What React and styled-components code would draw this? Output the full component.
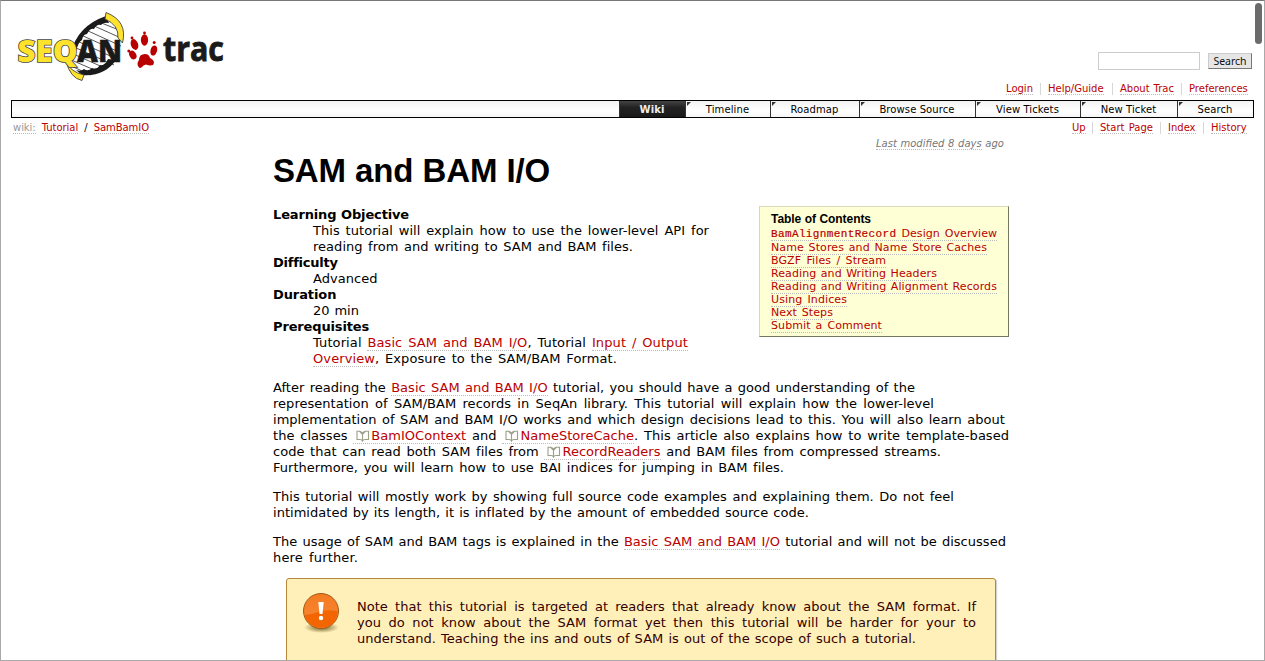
import React from 'react';
import styled, { createGlobalStyle, css } from 'styled-components';

const Global = createGlobalStyle`
  * { box-sizing: border-box; }
  html, body { margin: 0; overflow: hidden; }
  body { background: #fff; color: #000; font: 13px/16px "DejaVu Sans", Verdana, sans-serif; }
`;

const Page = styled.div`
  position: relative;
  height: 661px;
  overflow: hidden;
  padding: 0 10px;
  border: 1px solid #a9a9a9;
  border-top-color: #777;
`;

const ScrollThumb = styled.div`
  position: absolute;
  top: 2px;
  right: 2px;
  width: 7px;
  height: 41px;
  border-radius: 4px;
  background: #6b6b6b;
`;

const Header = styled.header`
  display: flex;
  justify-content: space-between;
  height: 99px;
`;

const LogoSvg = styled.svg`
  display: block;
  margin: 9px 0 0 5px;
`;

const HeaderTools = styled.div`
  display: flex;
  flex-direction: column;
  align-items: flex-end;
  padding: 51px 1px 0 0;
`;

const SearchForm = styled.div`
  display: flex;
  align-items: center;
  gap: 8px;
  margin-right: 1px;
`;

const SearchInput = styled.input`
  width: 102px;
  height: 18px;
  border: 1px solid #ccc;
  background: #fff;
  padding: 0;
`;

const SearchButton = styled.button`
  width: 44px;
  height: 16px;
  padding: 0;
  border: 1px solid #ccc;
  border-right-color: #777;
  border-bottom-color: #777;
  background: #e6e6e6;
  color: #111;
  font: 10.5px/13px "Noto Sans", sans-serif;
`;

const Link = styled.a`
  color: #b00;
  border-bottom: 1px dotted #bbb;
  ${(p) => p.$muted && css`color: #999;`}
`;

const Fit = styled.span`
  display: block;
  width: ${(p) => p.$w}px;
  letter-spacing: ${(p) => p.$ls ?? 0.03}px;
  text-align: justify;
  text-align-last: justify;
  white-space: nowrap;
`;

const Menu = styled.ul`
  display: flex;
  justify-content: flex-end;
  list-style: none;
  margin: ${(p) => p.$top}px ${(p) => p.$right}px 0 0;
  padding: 0;
  font-size: 10px;
  line-height: 12px;
`;

const MenuItem = styled.li`
  height: 12px;
  padding: 0 7px;
  & + & { border-left: 1px solid #d7d7d7; }
  &:last-child { padding-right: 1px; }
`;

const Nav = styled.nav`
  display: flex;
  justify-content: flex-end;
  width: 1243px;
  height: 18px;
  border: 1px solid #000;
  background: linear-gradient(#f2f2f2, #fff 60%, #f6f6f6);
  font-size: 10px;
  line-height: 17px;
`;

const Tab = styled.div`
  position: relative;
  width: ${(p) => p.$w}px;
  border-left: 1px solid #333;
  text-align: center;
  letter-spacing: 0.1px;
  padding-right: 1px;
  &::before {
    content: "";
    position: absolute;
    left: 1px;
    top: 1px;
    border-top: 4px solid #333;
    border-right: 4px solid transparent;
  }
  ${(p) => p.$active && css`
    background: linear-gradient(#444, #222 40%, #181a18);
    color: #eee;
    font-weight: bold;
    &::before { display: none; }
  `}
`;

const SubBar = styled.div`
  display: flex;
  justify-content: space-between;
  padding-left: 2px;
  height: 19px;
`;

const Path = styled.div`
  margin-top: 4px;
  font-size: 10px;
  line-height: 12px;
`;

const Content = styled.main`
  width: 740px;
  margin: 0 0 0 262px;
`;

const Modified = styled.div`
  display: flex;
  justify-content: flex-end;
  padding-right: 9px;
  color: #777;
  font-size: 10px;
  line-height: 13px;
  font-style: italic;
  a { color: #777; }
`;

const Title = styled.h1`
  margin: 1px 0 15px;
  font: bold 33px/40px "Liberation Sans", Arial, sans-serif;
`;

const Intro = styled.div`
  display: flex;
  align-items: flex-start;
  justify-content: space-between;
  width: 736px;
`;

const Defs = styled.dl`
  margin: 1px 0 0;
  dt { font-weight: bold; }
  dd { margin: 0 0 0 40px; }
`;

const Toc = styled.aside`
  width: 250px;
  height: 131px;
  padding: 5px 0 0 11px;
  border: 1px solid #d7d7bb;
  border-right-color: #77775f;
  border-bottom-color: #77775f;
  background: #ffffd6;
  font-size: 11px;
  line-height: 13px;
  h4 { margin: 0; font: bold 12px/14px "Liberation Sans", Arial, sans-serif; }
  code { font: 11px/12px "Liberation Mono", monospace; letter-spacing: 0.37px; -webkit-text-stroke: 0.2px #b00; }
`;

const TocFirst = styled.div`
  height: 15px;
  line-height: 15px;
`;

const Para = styled.p`
  margin: 13px 0 0;
`;

const BookSvg = styled.svg`
  vertical-align: -2px;
  margin: 0 1px 0 2px;
`;

const Note = styled.section`
  display: flex;
  width: 710px;
  height: 110px;
  margin: 12px 0 0 13px;
  padding: 14px 0 0 16px;
  border: 1px solid #b8863b;
  border-radius: 3px;
  background: #fff0ba;
  box-shadow: 1px 1px 1px #ccc;
  color: #300;
`;

const NoteText = styled.div`
  margin: 6px 0 0 16px;
`;

const Logo = () => (
  <LogoSvg width="225" height="76" viewBox="16 10 225 76">
    <path d="M76 50Q82 29 106 19L119 32Q123 44 114 62Q105 74 83 72L68 62Z" fill="#fff" />
    <path d="M99 22L119 30M92 25L121 38M86 30L121 46M81 35L119 52M77 41L117 59M74 47L114 65M71 53L107 69M69 59L99 72M69 65L91 75" stroke="#444" strokeWidth=".9" />
    <path d="M71 53Q77 26 106 16L109 23Q103 22 101 25Q97 24 94 29Q90 28 87 34Q83 34 82 40Q78 42 76 52Z" fill="#1a1a1a" />
    <path d="M116 60Q104 77 82 75L76 70Q81 72 84 69Q88 72 92 68Q97 70 100 65Q105 66 108 59Z" fill="#1a1a1a" />
    <path d="M106 12.500Q128 21 122.500 43L118 38Q119 25 105 19Z" fill="#ffe22b" stroke="#444" strokeWidth=".9" />
    <path d="M66 61Q70 72 84 75L82 80.500Q70 78 66 61Z" fill="#ffe22b" stroke="#444" strokeWidth=".9" />
    <text x="17.500" y="61.500" textLength="60" lengthAdjust="spacingAndGlyphs" fontFamily="Open Sans" fontWeight="800" fontSize="30.500" fill="#ffe22b" stroke="#444" strokeWidth="1.600" paintOrder="stroke">SEQ</text>
    <text x="77" y="61.500" textLength="45" lengthAdjust="spacingAndGlyphs" fontFamily="Open Sans" fontWeight="800" fontSize="30.500" fill="#1a1a1a" stroke="#1a1a1a" strokeWidth=".5">AN</text>
    <g fill="#b80000">
      <ellipse cx="144.500" cy="40" rx="3.600" ry="5.800" />
      <ellipse cx="134.500" cy="44.500" rx="3.600" ry="5.600" transform="rotate(-20 134.500 44.500)" />
      <ellipse cx="153.800" cy="50.500" rx="3.300" ry="5.200" transform="rotate(15 153.800 50.500)" />
      <ellipse cx="132.800" cy="55" rx="3.300" ry="4.600" transform="rotate(-30 132.800 55)" />
      <path d="M139 67.500Q136 64 139 60Q139 54 145 54Q149 54 150 58Q156 61 153 65Q150 66 146 64.500Q143 65 142 67Q140 68.500 139 67.500Z" />
      <circle cx="144.500" cy="33" r="1.400" /><circle cx="132" cy="38" r="1.400" />
      <circle cx="154.200" cy="42.500" r="1.500" /><circle cx="128.800" cy="51" r="1.500" />
    </g>
    <text x="163" y="61" textLength="61" lengthAdjust="spacingAndGlyphs" fontFamily="Open Sans" fontWeight="700" fontSize="34.500" fill="#1a1a1a" stroke="#1a1a1a" strokeWidth=".9">trac</text>
  </LogoSvg>
);

const Book = () => (
  <BookSvg width="15" height="12" viewBox="0 0 15 12" fill="none" stroke="#9aa088" strokeWidth="1.100">
    <path d="M7.500 11V3.500Q6.500 1 4.500 1.200L7 4M7.500 3.500Q8.500 1 10.500 1.200L8 4M4.500 1.200H2V9.500H5Q7 9.500 7.500 11Q8 9.500 10 9.500H13.500V1.200H10.500" />
  </BookSvg>
);

const Warning = () => (
  <svg width="38" height="42" viewBox="0 0 38 42">
    <defs>
      <linearGradient id="orange" x2="0" y2="1">
        <stop stopColor="#f47a20" /><stop offset="1" stopColor="#f88a3a" />
      </linearGradient>
      <radialGradient id="shade"><stop stopColor="#6b5b20" /><stop offset="1" stopColor="#6b5b20" stopOpacity="0" /></radialGradient>
    </defs>
    <ellipse cx="18.500" cy="34.500" rx="17.500" ry="5.500" fill="url(#shade)" />
    <circle cx="18" cy="18" r="17.500" fill="url(#orange)" stroke="#a05a18" />
    <path d="M1.500 22Q8 22 15 19T34.500 18Q34 34 18 34.800Q5 34 1.500 22Z" fill="#f26500" />
    <path d="M15.300 9H20.700L19.500 21H16.500Z" fill="#fff" /><circle cx="18" cy="25" r="2.200" fill="#fff" />
  </svg>
);

const META = [['Login', 27], ['Help/Guide', 57], ['About Trac', 54], ['Preferences', 58]];
const CTX = [['Up', 13], ['Start Page', 53], ['Index', 28], ['History', 36]];
const TABS = [['Wiki', 66], ['Timeline', 85], ['Roadmap', 89], ['Browse Source', 116], ['View Tickets', 105], ['New Ticket', 97], ['Search', 76]];
const TOC = [['Name Stores and Name Store Caches', 216], ['BGZF Files / Stream', 115], ['Reading and Writing Headers', 166], ['Reading and Writing Alignment Records', 226], ['Using Indices', 76], ['Next Steps', 62], ['Submit a Comment', 111]];

const LinkMenu = ({ items, top, right }) => (
  <Menu $top={top} $right={right}>
    {items.map(([t, w]) => <MenuItem key={t}><Fit $w={w} $ls={0}><Link>{t}</Link></Fit></MenuItem>)}
  </Menu>
);

export default function App() {
  return (
    <Page>
      <Global />
      <ScrollThumb />
      <Header>
        <Logo />
        <HeaderTools>
          <SearchForm><SearchInput /><SearchButton>Search</SearchButton></SearchForm>
          <LinkMenu items={META} top={13} right={5} />
        </HeaderTools>
      </Header>
      <Nav>{TABS.map(([t, w], i) => <Tab key={t} $w={w} $active={i === 0}>{t}</Tab>)}</Nav>
      <SubBar>
        <Path><Fit $w={136} $ls={-0.05}><Link $muted>wiki:</Link> <Link>Tutorial</Link> / <Link>SamBamIO</Link></Fit></Path>
        <LinkMenu items={CTX} top={4} right={6} />
      </SubBar>
      <Content>
        <Modified><Fit $w={128} $ls={0}><Link>Last modified</Link> <Link>8 days</Link> ago</Fit></Modified>
        <Title><Fit $w={277} $ls={-0.15}>SAM and BAM I/O</Fit></Title>
        <Intro>
          <Defs>
            <dt><Fit $w={136} $ls={-0.15}>Learning Objective</Fit></dt>
            <dd><Fit $w={396}>This tutorial will explain how to use the lower-level API for</Fit><Fit $w={320}>reading from and writing to SAM and BAM files.</Fit></dd>
            <dt><Fit $w={64} $ls={-0.25}>Difficulty</Fit></dt>
            <dd><Fit $w={65}>Advanced</Fit></dd>
            <dt><Fit $w={63} $ls={-0.1}>Duration</Fit></dt>
            <dd><Fit $w={46}>20 min</Fit></dd>
            <dt><Fit $w={97} $ls={-0.15}>Prerequisites</Fit></dt>
            <dd>
              <Fit $w={375} $ls={0.1}>Tutorial <Link>Basic SAM and BAM I/O</Link>, Tutorial <Link>Input / Output</Link></Fit>
              <Fit $w={304} $ls={0.1}><Link>Overview</Link>, Exposure to the SAM/BAM Format.</Fit>
            </dd>
          </Defs>
          <Toc>
            <h4><Fit $w={100} $ls={-0.05}>Table of Contents</Fit></h4>
            <TocFirst><Fit $w={226} $ls={0.05}><Link><code>BamAlignmentRecord</code> Design Overview</Link></Fit></TocFirst>
            {TOC.map(([t, w]) => <Fit key={t} $w={w} $ls={0.1}><Link>{t}</Link></Fit>)}
          </Toc>
        </Intro>
        <Para>
          <Fit $w={642}>After reading the <Link>Basic SAM and BAM I/O</Link> tutorial, you should have a good understanding of the</Fit>
          <Fit $w={661}>representation of SAM/BAM records in SeqAn library. This tutorial will explain how the lower-level</Fit>
          <Fit $w={732}>implementation of SAM and BAM I/O works and which design decisions lead to this. You will also learn about</Fit>
          <Fit $w={736}>the classes <Link><Book />BamIOContext</Link> and <Link><Book />NameStoreCache</Link>. This article also explains how to write template-based</Fit>
          <Fit $w={668}>code that can read both SAM files from <Link><Book />RecordReaders</Link> and BAM files from compressed streams.</Fit>
          <Fit $w={511}>Furthermore, you will learn how to use BAI indices for jumping in BAM files.</Fit>
        </Para>
        <Para>
          <Fit $w={681}>This tutorial will mostly work by showing full source code examples and explaining them. Do not feel</Fit>
          <Fit $w={536}>intimidated by its length, it is inflated by the amount of embedded source code.</Fit>
        </Para>
        <Para>
          <Fit $w={733}>The usage of SAM and BAM tags is explained in the <Link>Basic SAM and BAM I/O</Link> tutorial and will not be discussed</Fit>
          <Fit $w={85} $ls={0.15}>here further.</Fit>
        </Para>
        <Note>
          <Warning />
          <NoteText>
            <Fit $w={619}>Note that this tutorial is targeted at readers that already know about the SAM format. If</Fit>
            <Fit $w={619}>you do not know about the SAM format yet then this tutorial will be harder for your to</Fit>
            <Fit $w={559}>understand. Teaching the ins and outs of SAM is out of the scope of such a tutorial.</Fit>
          </NoteText>
        </Note>
      </Content>
    </Page>
  );
}
